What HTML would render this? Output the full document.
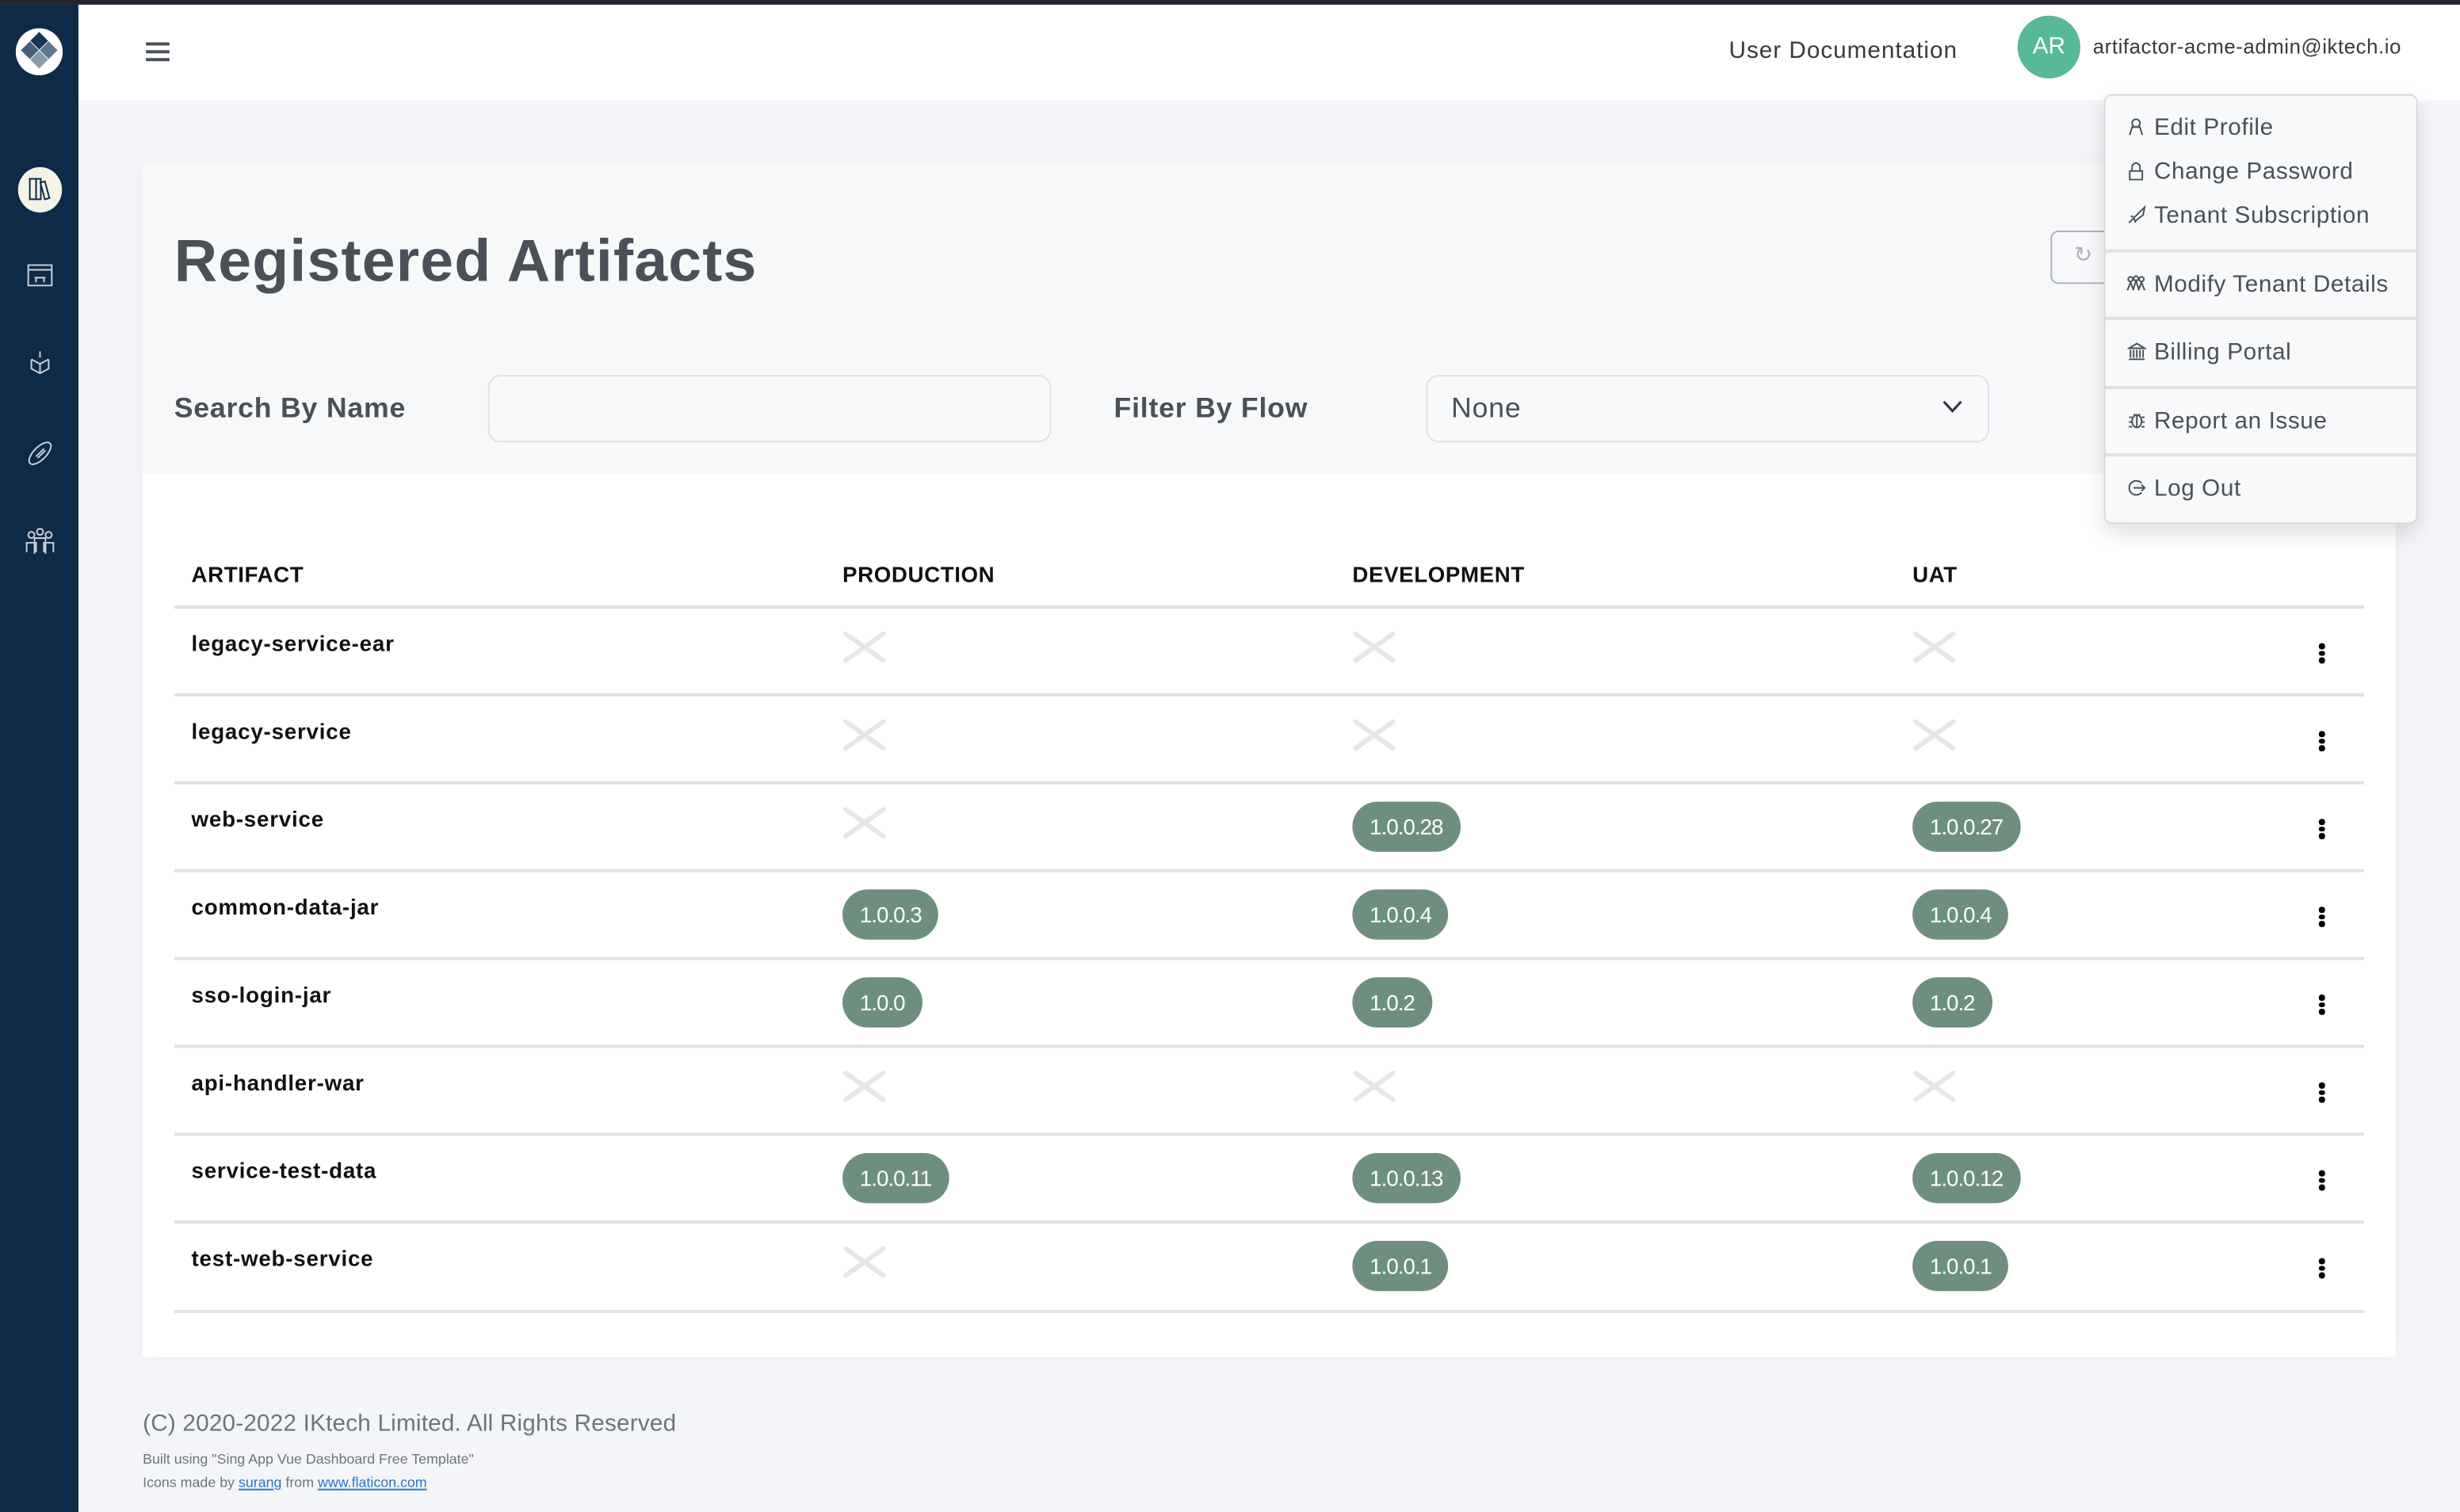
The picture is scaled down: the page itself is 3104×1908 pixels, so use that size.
<!DOCTYPE html>
<html><head><meta charset="utf-8">
<style>
html,body{margin:0;padding:0;width:3104px;height:1908px;overflow:hidden;background:#f4f5f8;}
#s{position:absolute;left:0;top:0;width:1568px;height:964px;transform:scale(1.979592);transform-origin:0 0;font-family:"Liberation Sans",sans-serif;background:#f4f5f8;}
.a{position:absolute;white-space:nowrap;}
.topbar{left:0;top:0;width:1568px;height:3px;background:#22252b;}
.side{left:0;top:3px;width:50px;height:961px;background:#0e2a47;}
.hdr{left:50px;top:3px;width:1518px;height:61px;background:#fff;}
.card{left:91px;top:104px;width:1436px;height:761px;background:#fff;box-shadow:0 0 12px rgba(0,0,0,.04);}
.cardtop{left:91px;top:104px;width:1436px;height:198px;background:#f7f8fa;}
.lbl{font-weight:bold;font-size:18px;color:#495057;letter-spacing:0.4px;}
.inp{border:1px solid #dde1e6;border-radius:8px;background:#f8f9fb;height:41px;}
.th{font-size:14px;font-weight:bold;color:#111;top:358px;letter-spacing:0.3px;}
.line{left:111px;width:1396px;height:2px;background:#dde2e6;}
.name{font-size:14px;font-weight:bold;color:#111;left:122px;letter-spacing:0.4px;}
.badge{background:#6f8f7e;color:#fff;font-size:14px;height:32px;line-height:32px;border-radius:16px;padding:0 11px;letter-spacing:-0.5px;}
.x{width:30px;height:22px;}
.dots{left:1478px;width:3px;}
.dots i{display:block;width:3.5px;height:3.5px;background:#000;border-radius:50%;margin-bottom:1px;}
.dd{left:1341px;top:60px;width:198px;height:272px;background:#f8f9fa;border:1px solid #d6d8db;border-radius:5px;box-shadow:0 6px 14px rgba(0,0,0,.12);}
.mi{left:1373px;font-size:15px;color:#495057;letter-spacing:0.3px;}
.ic{left:1356px;font-size:11px;color:#495057;}
.dv{left:1342px;width:198px;height:2px;background:#dfe1e4;}
</style></head><body><div id="s">
<div class="a topbar"></div>
<div class="a side"></div>
<svg class="a" style="left:10px;top:18px" width="30" height="30" viewBox="0 0 30 30"><circle cx="15" cy="15" r="15" fill="#fff"/><rect x="11" y="4" width="8" height="8" transform="rotate(45 15 8)" fill="#1c3553"/><rect x="5" y="10" width="8" height="8" transform="rotate(45 9 14)" fill="#44607d"/><rect x="17" y="10" width="8" height="8" transform="rotate(45 21 14)" fill="#5e7690"/><rect x="11" y="16" width="8" height="8" transform="rotate(45 15 20)" fill="#8a9aa8"/></svg>
<svg class="a" style="left:11px;top:106px" width="29" height="30"><ellipse cx="14.5" cy="15" rx="14" ry="14.5" fill="#f4f3e6"/><rect x="8" y="8" width="4" height="13" fill="none" stroke="#0e2a47" stroke-width="1"/><rect x="12" y="8" width="3" height="13" fill="none" stroke="#0e2a47" stroke-width="1"/><rect x="16" y="10" width="3" height="11" fill="none" stroke="#0e2a47" stroke-width="1" transform="rotate(-15 17 15)"/></svg>
<svg class="a" style="left:17px;top:167px" width="17" height="17"><rect x="1" y="2" width="15" height="13" fill="none" stroke="#c8d0d8" stroke-width="1"/><line x1="1" y1="5" x2="16" y2="5" stroke="#c8d0d8"/><path d="M5 10h7M6 10v3M11 10v3" stroke="#c8d0d8" fill="none"/></svg>
<svg class="a" style="left:17px;top:223px" width="17" height="19"><path d="M8.5 1v4M3 6l5.5 3 5.5-3M8.5 9v6M3 6v6l5.5 3 5.5-3V6" stroke="#c8d0d8" fill="none"/></svg>
<svg class="a" style="left:17px;top:280px" width="17" height="18"><ellipse cx="8.5" cy="9" rx="4" ry="9" transform="rotate(45 8.5 9)" fill="none" stroke="#c8d0d8"/><path d="M6 11l5-5M7 12l5-5" stroke="#c8d0d8"/></svg>
<svg class="a" style="left:16px;top:336px" width="19" height="19"><circle cx="4" cy="5" r="2" fill="none" stroke="#c8d0d8"/><circle cx="9.5" cy="3" r="2" fill="none" stroke="#c8d0d8"/><circle cx="15" cy="5" r="2" fill="none" stroke="#c8d0d8"/><path d="M1 16v-6h6v6M6 17V7h7v10M12 16v-6h6v6" fill="none" stroke="#c8d0d8"/></svg>

<div class="a hdr"></div>
<div class="a" style="left:93px;top:27px;width:15px;height:1.5px;background:#495057;box-shadow:0 5px 0 #495057,0 10px 0 #495057"></div>
<div class="a" style="left:1102px;top:24px;font-size:15px;color:#343a40;letter-spacing:0.5px">User Documentation</div>
<div class="a" style="left:1286px;top:10px;width:40px;height:40px;border-radius:50%;background:#57b89a;color:#fff;font-size:15px;text-align:center;line-height:40px">AR</div>
<div class="a" style="left:1334px;top:22px;font-size:13px;color:#343a40;letter-spacing:0.3px">artifactor-acme-admin@iktech.io</div>

<div class="a card"></div>
<div class="a cardtop"></div>
<div class="a" style="left:111px;top:146px;font-size:38px;font-weight:bold;color:#495057;letter-spacing:0.6px">Registered Artifacts</div>
<div class="a" style="left:1307px;top:147px;width:50px;height:32px;border:1px solid #aab2b9;border-radius:5px"></div>
<div class="a" style="left:1322px;top:154px;font-size:14px;color:#aab2b9">&#x21bb;</div>
<div class="a lbl" style="left:111px;top:250px">Search By Name</div>
<div class="a inp" style="left:311px;top:239px;width:357px"></div>
<div class="a lbl" style="left:710px;top:250px">Filter By Flow</div>
<div class="a inp" style="left:909px;top:239px;width:357px"></div>
<div class="a" style="left:925px;top:250px;font-size:18px;color:#495057;letter-spacing:0.4px">None</div>
<svg class="a" style="left:1238px;top:255px" width="13" height="9"><path d="M1 1l5.5 6 5.5-6" fill="none" stroke="#343a40" stroke-width="1.6"/></svg>

<div class="a th" style="left:122px">ARTIFACT</div>
<div class="a th" style="left:537px">PRODUCTION</div>
<div class="a th" style="left:862px">DEVELOPMENT</div>
<div class="a th" style="left:1219px">UAT</div>
<div class="a line" style="top:386px"></div>

<div class="a name" style="top:402px">legacy-service-ear</div>
<div class="a name" style="top:458px">legacy-service</div>
<div class="a name" style="top:514px">web-service</div>
<div class="a name" style="top:570px">common-data-jar</div>
<div class="a name" style="top:626px">sso-login-jar</div>
<div class="a name" style="top:682px">api-handler-war</div>
<div class="a name" style="top:738px">service-test-data</div>
<div class="a name" style="top:794px">test-web-service</div>

<div class="a line" style="top:442px"></div>
<div class="a line" style="top:498px"></div>
<div class="a line" style="top:554px"></div>
<div class="a line" style="top:610px"></div>
<div class="a line" style="top:666px"></div>
<div class="a line" style="top:722px"></div>
<div class="a line" style="top:778px"></div>
<div class="a line" style="top:835px"></div>

<svg width="0" height="0" style="position:absolute"><defs><g id="xx"><path d="M3 2l24 17M27 2L3 19" stroke="#e6e6e6" stroke-width="3" stroke-linecap="round"/></g></defs></svg>
<svg class="a x" style="left:536px;top:402px"><use href="#xx"/></svg>
<svg class="a x" style="left:861px;top:402px"><use href="#xx"/></svg>
<svg class="a x" style="left:1218px;top:402px"><use href="#xx"/></svg>
<svg class="a x" style="left:536px;top:458px"><use href="#xx"/></svg>
<svg class="a x" style="left:861px;top:458px"><use href="#xx"/></svg>
<svg class="a x" style="left:1218px;top:458px"><use href="#xx"/></svg>
<svg class="a x" style="left:536px;top:514px"><use href="#xx"/></svg>
<svg class="a x" style="left:536px;top:682px"><use href="#xx"/></svg>
<svg class="a x" style="left:861px;top:682px"><use href="#xx"/></svg>
<svg class="a x" style="left:1218px;top:682px"><use href="#xx"/></svg>
<svg class="a x" style="left:536px;top:794px"><use href="#xx"/></svg>

<div class="a badge" style="left:862px;top:511px">1.0.0.28</div>
<div class="a badge" style="left:1219px;top:511px">1.0.0.27</div>
<div class="a badge" style="left:537px;top:567px">1.0.0.3</div>
<div class="a badge" style="left:862px;top:567px">1.0.0.4</div>
<div class="a badge" style="left:1219px;top:567px">1.0.0.4</div>
<div class="a badge" style="left:537px;top:623px">1.0.0</div>
<div class="a badge" style="left:862px;top:623px">1.0.2</div>
<div class="a badge" style="left:1219px;top:623px">1.0.2</div>
<div class="a badge" style="left:537px;top:735px">1.0.0.11</div>
<div class="a badge" style="left:862px;top:735px">1.0.0.13</div>
<div class="a badge" style="left:1219px;top:735px">1.0.0.12</div>
<div class="a badge" style="left:862px;top:791px">1.0.0.1</div>
<div class="a badge" style="left:1219px;top:791px">1.0.0.1</div>

<div class="a dots" style="top:410px"><i></i><i></i><i></i></div>
<div class="a dots" style="top:466px"><i></i><i></i><i></i></div>
<div class="a dots" style="top:522px"><i></i><i></i><i></i></div>
<div class="a dots" style="top:578px"><i></i><i></i><i></i></div>
<div class="a dots" style="top:634px"><i></i><i></i><i></i></div>
<div class="a dots" style="top:690px"><i></i><i></i><i></i></div>
<div class="a dots" style="top:746px"><i></i><i></i><i></i></div>
<div class="a dots" style="top:802px"><i></i><i></i><i></i></div>

<div class="a dd"></div>
<svg class="a" style="left:1356px;top:75px" width="11" height="12"><circle cx="5.5" cy="3.5" r="2.5" fill="none" stroke="#495057"/><path d="M1.5 11l1.5-5h5l1.5 5" fill="none" stroke="#495057"/></svg><div class="a mi" style="top:73px">Edit Profile</div>
<svg class="a" style="left:1356px;top:103px" width="11" height="12"><path d="M3 6V3.5a2.5 2.5 0 015 0V6" fill="none" stroke="#495057"/><rect x="1.5" y="6" width="8" height="5.5" fill="none" stroke="#495057"/></svg><div class="a mi" style="top:101px">Change Password</div>
<svg class="a" style="left:1356px;top:131px" width="12" height="12"><path d="M4 8l6-6 1 -1-1 5-5 4zM4 8l-3 3M2 7l2 0M5 10l0 1" fill="none" stroke="#495057"/></svg><div class="a mi" style="top:129px">Tenant Subscription</div>
<div class="a dv" style="top:159px"></div>
<svg class="a" style="left:1355px;top:175px" width="13" height="12"><circle cx="3" cy="3" r="1.5" fill="none" stroke="#495057"/><circle cx="6.5" cy="2.5" r="1.5" fill="none" stroke="#495057"/><circle cx="10" cy="3" r="1.5" fill="none" stroke="#495057"/><path d="M1 10l2-5 2 5M4.5 10l2-6 2 6M8 10l2-5 2 5" fill="none" stroke="#495057"/></svg><div class="a mi" style="top:173px">Modify Tenant Details</div>
<div class="a dv" style="top:202px"></div>
<svg class="a" style="left:1356px;top:218px" width="12" height="12"><path d="M1 4l5-3 5 3zM2 5v5M4 5v5M6 5v5M8 5v5M10 5v5M1 11h10" fill="none" stroke="#495057"/></svg><div class="a mi" style="top:216px">Billing Portal</div>
<div class="a dv" style="top:246px"></div>
<svg class="a" style="left:1356px;top:262px" width="12" height="12"><ellipse cx="6" cy="6.5" rx="3" ry="4" fill="none" stroke="#495057"/><path d="M1 4h2M9 4h2M1 7h2M9 7h2M1 10h2M9 10h2M4 2l1 1M8 2l-1 1M6 3v7" fill="none" stroke="#495057"/></svg><div class="a mi" style="top:260px">Report an Issue</div>
<div class="a dv" style="top:289px"></div>
<svg class="a" style="left:1356px;top:305px" width="12" height="12"><path d="M9 3A4.5 4.5 0 1 0 9 9M4 6h7M9 4l2 2-2 2" fill="none" stroke="#495057"/></svg><div class="a mi" style="top:303px">Log Out</div>

<div class="a" style="left:91px;top:899px;font-size:15px;color:#6c757d;letter-spacing:0.1px">(C) 2020-2022 IKtech Limited. All Rights Reserved</div>
<div class="a" style="left:91px;top:925px;font-size:9px;color:#6c757d">Built using "Sing App Vue Dashboard Free Template"</div>
<div class="a" style="left:91px;top:940px;font-size:9px;color:#6c757d">Icons made by <span style="color:#2477c9;text-decoration:underline">surang</span> from <span style="color:#2477c9;text-decoration:underline">www.flaticon.com</span></div>
</div></body></html>
